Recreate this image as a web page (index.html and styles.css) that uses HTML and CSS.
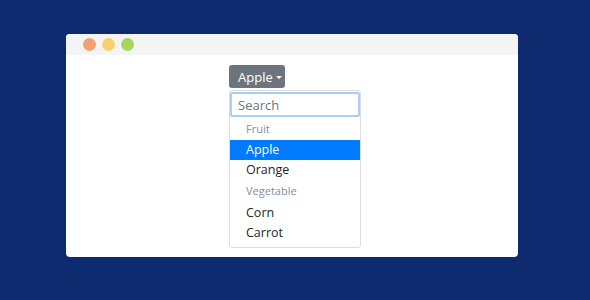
FILE: index.html
```html
<!DOCTYPE html>
<html>
<head>
<meta charset="utf-8">
<link rel="stylesheet" href="styles.css">
</head>
<body>
<div class="window">
  <div class="titlebar">
    <span class="dot orange"></span>
    <span class="dot yellow"></span>
    <span class="dot green"></span>
  </div>
  <div class="content">
    <div class="select">
      <button class="btn">Apple <span class="caret"></span></button>
      <div class="menu">
        <input class="search" type="text" placeholder="Search">
        <div class="header">Fruit</div>
        <div class="item active">Apple</div>
        <div class="item">Orange</div>
        <div class="header second">Vegetable</div>
        <div class="item">Corn</div>
        <div class="item">Carrot</div>
      </div>
    </div>
  </div>
</div>
</body>
</html>
```
FILE: styles.css
```css
html, body { margin: 0; padding: 0; }
body {
  background: #0e2a6f;
  width: 590px;
  height: 300px;
  padding: 34px 0 0 66px;
  box-sizing: border-box;
  font-family: "Open Sans", "Noto Sans", sans-serif;
}
.window {
  width: 452px;
  height: 223px;
  background: #fff;
  border-radius: 4px;
  overflow: hidden;
}
.titlebar {
  height: 21px;
  background: #f4f4f4;
  display: flex;
  align-items: center;
  gap: 6px;
  padding-left: 17px;
}
.dot { width: 13px; height: 13px; border-radius: 50%; display: block; }
.orange { background: #f0a072; }
.yellow { background: #f7d072; }
.green { background: #a5d65b; }
.content { padding: 10px 0 0 163px; }
.select { width: 132px; }
.btn {
  height: 23px;
  width: 56px;
  padding: 0 0 0 9px;
  border: none;
  border-radius: 3px;
  background: #6c757d;
  color: #fff;
  font-family: inherit;
  font-size: 13px;
  display: flex;
  align-items: center;
  gap: 3px;
}
.caret {
  display: inline-block;
  width: 0; height: 0;
  border-left: 3px solid transparent;
  border-right: 3px solid transparent;
  border-top: 3px solid #fff;
  margin-top: 1px;
}
.menu {
  margin-top: 2px;
  border: 1px solid #dcdcdc;
  border-radius: 3px;
  padding: 1px 0 4px;
  width: 132px;
  box-sizing: border-box;
}
.search {
  display: block;
  width: 100%;
  height: 25px;
  box-sizing: border-box;
  margin: 0;
  border: 2px solid #a8cdf8;
  border-radius: 2px;
  padding: 0 6px;
  font-family: inherit;
  font-size: 13px;
  color: #495057;
  outline: none;
}
.search::placeholder { color: #6c757d; }
.header {
  height: 22px;
  line-height: 22px;
  padding-left: 16px;
  font-size: 11px;
  color: #868e96;
  margin-top: 1px;
}
.header.second {
  margin-top: 0;
  height: 23px;
  line-height: 21px;
}
.item {
  height: 20px;
  line-height: 20px;
  padding-left: 16px;
  font-size: 12.5px;
  color: #212529;
}
.item.active { background: #007bff; color: #fff; }
```
